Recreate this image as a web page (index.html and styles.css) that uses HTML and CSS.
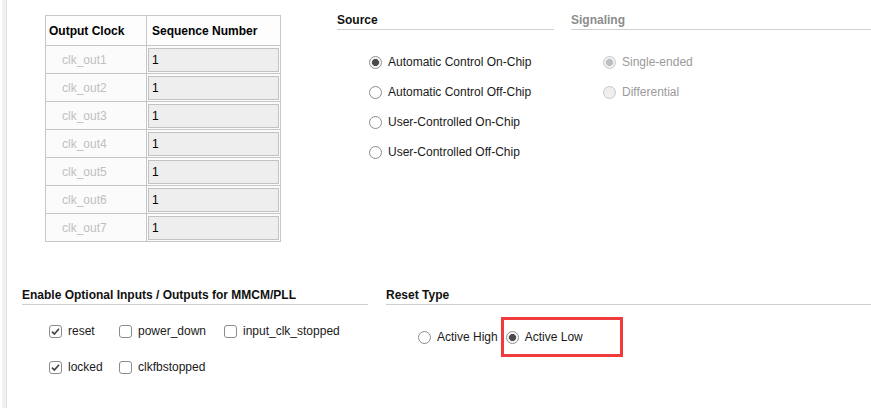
FILE: index.html
```html
<html>
  <head>
    <link rel="stylesheet" href="styles.css">
  </head>
  <body>
    <div class="page">
      <div class="inner">
        <div class="top">
          <table class="clocks">
            <colgroup><col class="c-name"><col class="c-seq"></colgroup>
            <thead>
              <tr><th class="h-name">Output Clock</th><th class="h-seq">Sequence Number</th></tr>
            </thead>
            <tbody>
              <tr><td class="name">clk_out1</td><td class="seq"><div class="field">1</div></td></tr>
              <tr><td class="name">clk_out2</td><td class="seq"><div class="field">1</div></td></tr>
              <tr><td class="name">clk_out3</td><td class="seq"><div class="field">1</div></td></tr>
              <tr><td class="name">clk_out4</td><td class="seq"><div class="field">1</div></td></tr>
              <tr><td class="name">clk_out5</td><td class="seq"><div class="field">1</div></td></tr>
              <tr><td class="name">clk_out6</td><td class="seq"><div class="field">1</div></td></tr>
              <tr><td class="name">clk_out7</td><td class="seq"><div class="field">1</div></td></tr>
            </tbody>
          </table>

          <div class="group source">
            <h3 class="group-title">Source</h3>
            <div class="radio-list">
              <label class="opt"><span class="radio checked"></span>Automatic Control On-Chip</label>
              <label class="opt"><span class="radio"></span>Automatic Control Off-Chip</label>
              <label class="opt"><span class="radio"></span>User-Controlled On-Chip</label>
              <label class="opt"><span class="radio"></span>User-Controlled Off-Chip</label>
            </div>
          </div>

          <div class="group signaling disabled">
            <h3 class="group-title">Signaling</h3>
            <div class="radio-list">
              <label class="opt"><span class="radio checked"></span>Single-ended</label>
              <label class="opt"><span class="radio"></span>Differential</label>
            </div>
          </div>
        </div>

        <div class="bottom">
          <div class="group optional">
            <h3 class="group-title">Enable Optional Inputs / Outputs for MMCM/PLL</h3>
            <div class="check-grid">
              <label class="chk"><span class="box checked"><svg width="11" height="11" viewBox="0 0 11 11"><path d="M2 5.6 L4.4 8 L9 2.8" fill="none" stroke="#444" stroke-width="1.7"/></svg></span>reset</label>
              <label class="chk"><span class="box"></span>power_down</label>
              <label class="chk"><span class="box"></span>input_clk_stopped</label>
              <label class="chk"><span class="box checked"><svg width="11" height="11" viewBox="0 0 11 11"><path d="M2 5.6 L4.4 8 L9 2.8" fill="none" stroke="#444" stroke-width="1.7"/></svg></span>locked</label>
              <label class="chk"><span class="box"></span>clkfbstopped</label>
            </div>
          </div>

          <div class="group reset-type">
            <h3 class="group-title">Reset Type</h3>
            <div class="radio-row">
              <label class="opt"><span class="radio"></span>Active High</label>
              <label class="opt marked"><span class="radio checked"></span>Active Low</label>
            </div>
          </div>
        </div>
      </div>
    </div>
  </body>
</html>
```
FILE: styles.css
```css
body {
  margin: 0;
  background-color: white;
  color: #1a1a1a;
  font-family: "Liberation Sans", Arial, sans-serif;
  font-size: 12px;
}
.page {
  margin-left: 2px;
  height: 408px;
  border-left: 4px solid #f1f1f1;
}
.inner {
  height: 100%;
  border-left: 1px solid #e0e0e0;
}
.top {
  display: flex;
  align-items: flex-start;
  height: 242px;
  padding-top: 13px;
  box-sizing: border-box;
}
.clocks {
  margin: 2px 0 0 38px;
  border-collapse: collapse;
  table-layout: fixed;
  width: 236px;
  font-size: 12px;
  line-height: 14px;
  background-color: #fbfbfb;
  border: 1px solid #c6c6c6;
}
.c-name {
  width: 101px;
}
.clocks th,
.clocks td {
  border: 1px solid #c6c6c6;
  padding: 0;
}
.clocks th {
  height: 30px;
  text-align: left;
  font-weight: bold;
  color: #000;
  background-color: #fdfdfd;
  white-space: nowrap;
}
.h-name {
  padding-left: 3px !important;
}
.h-seq {
  padding-left: 5px !important;
}
.clocks td {
  height: 27px;
}
.name {
  color: #c0c0c0;
  padding-left: 16px !important;
}
.seq {
  padding: 2px 1px 1px 1px !important;
}
.field {
  height: 22px;
  line-height: 22px;
  padding-left: 3px;
  border: 1px solid #c2c2c2;
  background-color: #eeeeee;
  color: #000;
}
.group-title {
  margin: 0;
  font-size: 12px;
  font-weight: bold;
  line-height: 14px;
  padding-bottom: 2px;
  border-bottom: 1px solid #cfcfcf;
  color: #111;
}
.source {
  margin-left: 56px;
  width: 217px;
}
.signaling {
  margin-left: 17px;
  flex: 1;
}
.disabled .group-title {
  color: #8c8c8c;
}
.radio-list {
  padding: 17px 0 0 32px;
}
.opt {
  display: flex;
  align-items: center;
  gap: 6px;
  height: 30px;
}
.radio {
  width: 13px;
  height: 13px;
  box-sizing: border-box;
  border: 1px solid #8c8c8c;
  border-radius: 50%;
  background: #fff;
}
.radio.checked {
  background: radial-gradient(circle, #4a4a4a 0 3.2px, #e6e6e6 3.8px, #fff 5px);
}
.disabled .opt {
  color: #9a9a9a;
}
.disabled .radio {
  border-color: #c8c8c8;
  background: #efefef;
}
.disabled .radio.checked {
  background: radial-gradient(circle, #bdbdbd 0 3.2px, #efefef 3.8px);
}
.bottom {
  display: flex;
  margin-top: 46px;
}
.optional {
  margin-left: 15px;
  width: 346px;
}
.reset-type {
  margin-left: 18px;
  flex: 1;
}
.check-grid {
  display: grid;
  grid-template-columns: 70px 105px auto;
  grid-auto-rows: 36px;
  align-items: center;
  padding: 8px 0 0 27px;
}
.chk {
  display: flex;
  align-items: center;
  gap: 6px;
}
.box {
  display: flex;
  align-items: center;
  justify-content: center;
  width: 13px;
  height: 13px;
  box-sizing: border-box;
  border: 1px solid #8c8c8c;
  border-radius: 3px;
  background: #fff;
}
.radio-row {
  display: flex;
  padding: 17px 0 0 32px;
}
.marked {
  position: relative;
  margin-left: 8px;
}
.marked::after {
  content: "";
  position: absolute;
  left: -5px;
  right: -40px;
  top: -5px;
  bottom: -5px;
  border: 3px solid #ef3b3b;
}
```
